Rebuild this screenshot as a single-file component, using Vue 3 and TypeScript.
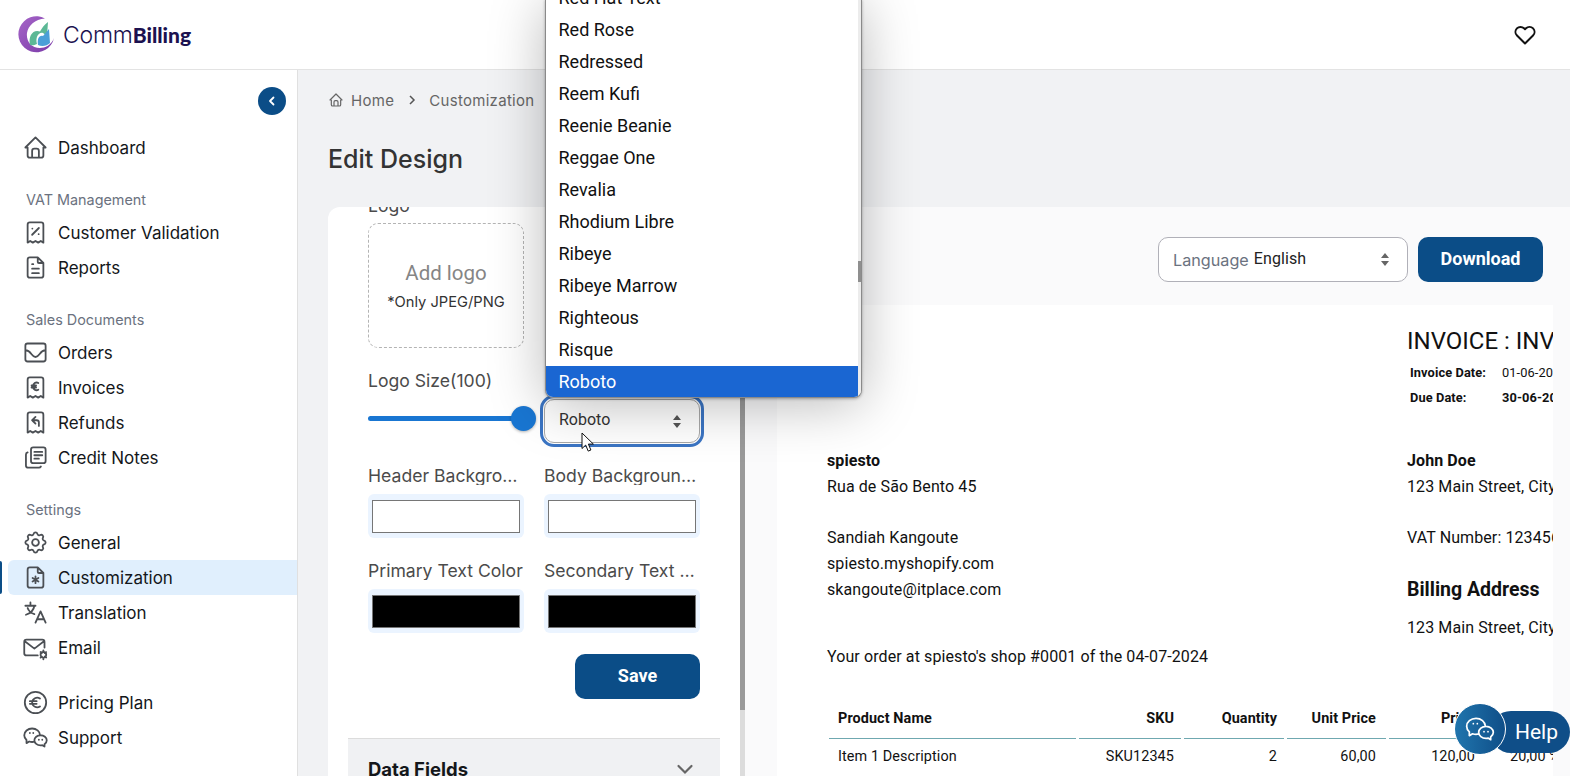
<script setup lang="ts">
interface NavItem { label: string; icon: string; active?: boolean }
interface NavGroup { title?: string; items: NavItem[] }

const receipt = 'M5 21v-16a2 2 0 0 1 2-2h10a2 2 0 0 1 2 2v16l-2.3-1.5-2.3 1.5-2.4-1.5-2.4 1.5-2.3-1.5z'
const groups: NavGroup[] = [
  { items: [{ label: 'Dashboard', icon: 'M5 12H3l9-9 9 9h-2M5 12v7a2 2 0 0 0 2 2h10a2 2 0 0 0 2-2v-7M9 21v-6a2 2 0 0 1 2-2h2a2 2 0 0 1 2 2v6' }] },
  { title: 'VAT Management', items: [
    { label: 'Customer Validation', icon: receipt + 'M9 14l6-6M9.2 8.5h.01M14.8 13.5h.01' },
    { label: 'Reports', icon: 'M14 3v4a1 1 0 0 0 1 1h4M17 21H7a2 2 0 0 1-2-2V5a2 2 0 0 1 2-2h7l5 5v11a2 2 0 0 1-2 2zM9 9h1M9 13h6M9 17h6' },
  ] },
  { title: 'Sales Documents', items: [
    { label: 'Orders', icon: 'M3 6a2 2 0 0 1 2-2h14a2 2 0 0 1 2 2v12a2 2 0 0 1-2 2H5a2 2 0 0 1-2-2zM3 10c3 0 4 1.500 5.500 3.500s2 2.500 3.500 2.500 2-.5 3.500-2.500 2.500-3.500 5.500-3.500' },
    { label: 'Invoices', icon: receipt + 'M14.500 8a3 3 0 0 0-4.500 3 3 3 0 0 0 4.500 3M8.500 10.200H12.500M8.500 12H12.500' },
    { label: 'Refunds', icon: receipt + 'M12 7L9 10l3 3M9 10h4a2 2 0 0 1 2 2v3' },
    { label: 'Credit Notes', icon: 'M8 5a2 2 0 0 1 2-2h9a2 2 0 0 1 2 2v10a2 2 0 0 1-2 2h-9a2 2 0 0 1-2-2zM11 7h7M11 10h7M11 13h4M5 7.500A2 2 0 0 0 3.500 9.500V19a2 2 0 0 0 2 2H15a2 2 0 0 0 1.800-1' },
  ] },
  { title: 'Settings', items: [
    { label: 'General', icon: 'M10.325 4.317c.426-1.756 2.924-1.756 3.350 0a1.724 1.724 0 0 0 2.573 1.066c1.543-.94 3.310.826 2.370 2.370a1.724 1.724 0 0 0 1.065 2.572c1.756.426 1.756 2.924 0 3.350a1.724 1.724 0 0 0-1.066 2.573c.94 1.543-.826 3.310-2.370 2.370a1.724 1.724 0 0 0-2.572 1.065c-.426 1.756-2.924 1.756-3.350 0a1.724 1.724 0 0 0-2.573-1.066c-1.543.94-3.310-.826-2.370-2.370a1.724 1.724 0 0 0-1.065-2.572c-1.756-.426-1.756-2.924 0-3.350a1.724 1.724 0 0 0 1.066-2.573c-.94-1.543.826-3.310 2.370-2.370 1 .608 2.296.07 2.572-1.065zM9 12a3 3 0 1 0 6 0 3 3 0 0 0-6 0' },
    { label: 'Customization', active: true, icon: 'M14 3v4a1 1 0 0 0 1 1h4M17 21H7a2 2 0 0 1-2-2V5a2 2 0 0 1 2-2h7l5 5v11a2 2 0 0 1-2 2zM12 11v6M9.400 12.500l5.200 3M14.600 12.500l-5.200 3' },
    { label: 'Translation', icon: 'M3 6h9M7.500 3v3M11 6c-.5 3.500-3 6.500-7.500 8M5 8c.8 2.500 3 4.500 6 5.500M12 21l4.500-10 4.500 10M13.500 18h6' },
    { label: 'Email', icon: 'M20 12V7a2 2 0 0 0-2-2H4a2 2 0 0 0-2 2v10a2 2 0 0 0 2 2h10M2.500 6.500L11 13l8.500-6.500M19 16a2.500 2.500 0 1 0 0 5 2.500 2.500 0 0 0 0-5zM19 14.500V16M19 21v1.500M16.500 16l1.200.9M20.300 20l1.200.9M16.500 21l1.200-.9M20.300 17l1.200-.9' },
  ] },
  { items: [
    { label: 'Pricing Plan', icon: 'M12 21.500a9.500 9.500 0 1 0 0-19 9.500 9.500 0 0 0 0 19zM16 8.500a4.500 4.500 0 0 0-7 3.500 4.500 4.500 0 0 0 7 3.500M7 10.800h6M7 13.200h6' },
    { label: 'Support', icon: 'M16.500 10c3.038 0 5.500 2.015 5.500 4.500 0 1.397-.778 2.645-2 3.470V20l-1.964-1.178a6.649 6.649 0 0 1-1.536.178c-3.038 0-5.500-2.015-5.500-4.500s2.462-4.500 5.500-4.500zM11.197 15.698c-.69.196-1.430.302-2.197.302a8.008 8.008 0 0 1-2.612-.432L4 17v-2.801C2.763 13.117 2 11.635 2 10c0-3.314 3.134-6 7-6 3.782 0 6.863 2.570 7 5.785M10 8h.01M7 8h.01M15 14h.01M18 14h.01' },
  ] },
]

const fonts: string[] = ['Red Hat Text', 'Red Rose', 'Redressed', 'Reem Kufi', 'Reenie Beanie', 'Reggae One', 'Revalia', 'Rhodium Libre', 'Ribeye', 'Ribeye Marrow', 'Righteous', 'Risque', 'Roboto']

const swatches = [
  { label: 'Header Background Color', black: false },
  { label: 'Body Background Color', black: false },
  { label: 'Primary Text Color', black: true },
  { label: 'Secondary Text Color', black: true },
]

const tableHead: string[] = ['Product Name', 'SKU', 'Quantity', 'Unit Price', 'Price', 'Tax']
const tableRow: string[] = ['Item 1 Description', 'SKU12345', '2', '60,00', '120,00', '20,00 %']
const wechat = 'M16.500 10c3.038 0 5.500 2.015 5.500 4.500 0 1.397-.778 2.645-2 3.470V20l-1.964-1.178a6.649 6.649 0 0 1-1.536.178c-3.038 0-5.500-2.015-5.500-4.500s2.462-4.500 5.500-4.500zM11.197 15.698c-.69.196-1.430.302-2.197.302a8.008 8.008 0 0 1-2.612-.432L4 17v-2.801C2.763 13.117 2 11.635 2 10c0-3.314 3.134-6 7-6 3.782 0 6.863 2.570 7 5.785M10 8h.01M7 8h.01M15 14h.01M18 14h.01'
</script>

<template>
  <div class="app">
    <header class="topbar">
      <div class="brand">
        <svg class="brand-mark" width="37" height="37" viewBox="0 0 37 37">
          <defs>
            <linearGradient id="crescent" x1="0" y1="0" x2="1" y2="1">
              <stop offset="0" stop-color="#a665c8" />
              <stop offset="1" stop-color="#7a3aa8" />
            </linearGradient>
          </defs>
          <path d="M27 2.500A18 18 0 1 0 36 22C33.500 29 27 32 22 32 13 32 8 25 9 17 10 10 17 3 27 2.500z" fill="url(#crescent)" />
          <path d="M12 29C10 20 15 13 22 15.500 24 12 26 9 30 6L29 20 25 17C21 15.500 17 21 19 28 16 29.500 14 29.500 12 29z" fill="#5cb896" />
          <path d="M20 29C19 23 21 19 25 20L31 13 32 27C29 30 24 31 20 29z" fill="#4a9fd8" />
        </svg>
        <span class="brand-text">Comm<b>Billing</b></span>
      </div>
      <svg class="heart" width="24" height="24" viewBox="0 0 24 24" fill="none" stroke="#111" stroke-width="2" stroke-linejoin="round">
        <path d="M12 20.500l-8-8a5 5 0 0 1 7-7.200l1 1 1-1a5 5 0 0 1 7 7.200z" />
      </svg>
    </header>

    <div class="body">
      <aside class="sidebar">
        <div class="toggle-row">
          <button class="toggle" type="button">
            <svg width="12" height="12" viewBox="0 0 12 12" fill="none" stroke="#fff" stroke-width="1.800" stroke-linecap="round" stroke-linejoin="round"><path d="M7.500 2.500L4 6l3.500 3.500" /></svg>
          </button>
        </div>
        <section v-for="(group, g) in groups" :key="g" class="group">
          <div v-if="group.title" class="group-title">{{ group.title }}</div>
          <a v-for="item in group.items" :key="item.label" class="nav-item" :class="{ active: item.active }">
            <svg class="nav-icon" width="27" height="27" viewBox="0 0 24 24" fill="none" stroke="#4b4f54" stroke-width="1.600" stroke-linecap="round" stroke-linejoin="round"><path :d="item.icon" /></svg>
            <span>{{ item.label }}</span>
          </a>
        </section>
      </aside>

      <main class="main">
        <nav class="crumbs">
          <svg width="16" height="16" viewBox="0 0 24 24" fill="none" stroke="#666" stroke-width="1.800" stroke-linecap="round" stroke-linejoin="round"><path d="M5 12H3l9-9 9 9h-2M5 12v7a2 2 0 0 0 2 2h10a2 2 0 0 0 2-2v-7M9 21v-6a2 2 0 0 1 2-2h2a2 2 0 0 1 2 2v6" /></svg>
          <span>Home</span>
          <svg class="crumb-sep" width="10" height="12" viewBox="0 0 10 12" fill="none" stroke="#555" stroke-width="1.500"><path d="M3 2l4 4-4 4" /></svg>
          <span>Customization</span>
        </nav>
        <h1 class="title">Edit Design</h1>

        <div class="panels">
          <section class="editor">
            <div class="form">
              <label class="form-label">Logo</label>
              <div class="logo-box">
                <span class="add-logo">Add logo</span>
                <span class="logo-hint">*Only JPEG/PNG</span>
              </div>
              <label class="form-label size-label">Logo Size(100)</label>
              <div class="two-col size-row">
                <div class="slider"><span class="slider-thumb"></span></div>
                <div class="select-box">
                  <span>Roboto</span>
                  <svg width="10" height="15" viewBox="0 0 10 15" fill="#555"><path d="M5 1l4 5H1zM5 14L1 9h8z" /></svg>
                </div>
              </div>
              <div class="two-col swatch-grid">
                <div v-for="s in swatches" :key="s.label" class="swatch-col">
                  <div class="form-label ellipsis">{{ s.label }}</div>
                  <div class="swatch"><div class="swatch-input" :class="{ black: s.black }"></div></div>
                </div>
              </div>
              <div class="save-row"><button class="btn save" type="button">Save</button></div>
            </div>
            <div class="accordion">
              <span>Data Fields</span>
              <svg width="18" height="12" viewBox="0 0 18 12" fill="none" stroke="#666" stroke-width="2.200" stroke-linecap="round"><path d="M2.500 3L9 9.500 15.500 3" /></svg>
            </div>
            <div class="scrollbar"><span></span></div>
          </section>

          <section class="preview">
            <div class="toolbar">
              <div class="lang">
                <span class="lang-label">Language</span>
                <span class="lang-value">English</span>
                <svg width="10" height="15" viewBox="0 0 10 15" fill="#666"><path d="M5 1l4 5H1zM5 14L1 9h8z" /></svg>
              </div>
              <button class="btn" type="button">Download</button>
            </div>
            <article class="invoice">
              <div class="inv-head">
                <div class="inv-no">INVOICE : INV-0001</div>
                <div class="inv-date"><b>Invoice Date:</b><span>01-06-2024</span></div>
                <div class="inv-date"><b>Due Date:</b><b>30-06-2024</b></div>
              </div>
              <div class="inv-cols">
                <div>
                  <div class="line"><b>spiesto</b></div>
                  <div class="line">Rua de São Bento 45</div>
                  <div class="line">&nbsp;</div>
                  <div class="line">Sandiah Kangoute</div>
                  <div class="line">spiesto.myshopify.com</div>
                  <div class="line">skangoute@itplace.com</div>
                </div>
                <div>
                  <div class="line"><b>John Doe</b></div>
                  <div class="line">123 Main Street, City</div>
                  <div class="line">&nbsp;</div>
                  <div class="line">VAT Number: 123456789</div>
                  <div class="line">&nbsp;</div>
                  <div class="line billing">Billing Address</div>
                  <div class="line billing-addr">123 Main Street, City</div>
                </div>
              </div>
              <div class="line order">Your order at spiesto's shop #0001 of the 04-07-2024</div>
              <div class="items">
                <div v-for="h in tableHead" :key="h" class="cell head">{{ h }}</div>
                <div v-for="c in tableRow" :key="c" class="cell">{{ c }}</div>
              </div>
            </article>
          </section>
        </div>
      </main>
    </div>

    <div class="font-popup">
      <div class="font-list">
        <div v-for="f in fonts" :key="f" class="font-option" :class="{ selected: f === 'Roboto' }">{{ f }}</div>
      </div>
      <div class="popup-scroll"><span></span></div>
    </div>

    <svg class="cursor" width="14" height="21" viewBox="0 0 14 21"><path d="M1 1v15.500l3.700-3.400 2.500 6 2.700-1.100-2.500-5.900h5z" fill="#fff" stroke="#111" stroke-width="1" stroke-linejoin="round" /></svg>

    <div class="help">
      <span class="help-circle">
        <svg width="32" height="32" viewBox="0 0 24 24" fill="none" stroke="#fff" stroke-width="1.300" stroke-linecap="round" stroke-linejoin="round"><path :d="wechat" /></svg>
      </span>
      <span class="help-text">Help</span>
    </div>
  </div>
</template>

<style>
html, body { margin: 0; background: #fff; overflow: hidden; }
</style>

<style scoped>
* { box-sizing: border-box; }
.app { position: relative; width: 1570px; height: 776px; overflow: hidden; font-family: Inter, "Liberation Sans", sans-serif; color: #14171a; background: #f1f2f4; }
.topbar { height: 70px; background: #fff; border-bottom: 1px solid #e3e3e3; display: flex; align-items: center; justify-content: space-between; padding: 0 33px 0 18px; }
.brand { display: flex; align-items: center; gap: 8px; }
.brand-mark { display: block; margin-top: -1px; }
.brand-text { font-size: 23px; font-weight: 300; color: #1c1250; letter-spacing: -.2px; }
.brand-text b { font-family: Lato, sans-serif; font-size: 21px; font-weight: 900; letter-spacing: 0; }
.body { display: flex; height: 706px; }
.sidebar { width: 298px; flex: none; background: #fff; border-right: 1px solid #e0e0e0; }
.toggle-row { display: flex; justify-content: flex-end; padding: 17px 11px 0 0; height: 60px; }
.toggle { width: 28px; height: 28px; border: 0; padding: 0; border-radius: 50%; background: #0b4d87; display: flex; align-items: center; justify-content: center; }
.group { margin-bottom: 25px; }
.group:nth-of-type(4) { margin-bottom: 20px; }
.group-title { height: 20px; line-height: 20px; margin: 0 0 5px 26px; font-size: 14.400px; color: #6b7280; }
.nav-item { position: relative; display: flex; align-items: center; height: 35px; margin-left: 8px; padding-left: 14px; gap: 9px; font-size: 17px; color: #14171a; border-radius: 6px 0 0 6px; }
.nav-item.active { background: #e0effd; }
.nav-item.active::before { content: ""; position: absolute; left: -8px; top: 1px; bottom: 1px; width: 2px; background: #0b4d87; border-radius: 0 2px 2px 0; }
.nav-icon { flex: none; }
.main { flex: 1; min-width: 0; padding: 20px 0 0 30px; }
.crumbs { height: 20px; display: flex; align-items: center; font-size: 15px; letter-spacing: .3px; color: #666; }
.crumbs span:first-of-type { margin-left: 7px; }
.crumb-sep { margin: 0 12px 0 13px; }
.title { margin: 33px 0 0; height: 32px; line-height: 32px; font-size: 25px; font-weight: 500; color: #333; }
.panels { display: flex; margin-top: 32px; height: 569px; }
.editor { position: relative; width: 417px; flex: none; background: #fff; border-radius: 12px 0 0 0; overflow: hidden; }
.form { padding: 0 0 0 40px; margin-top: -12px; width: 372px; }
.form-label { display: block; height: 20px; line-height: 22px; font-size: 17.600px; color: #4b4b4b; }
.ellipsis { white-space: nowrap; overflow: hidden; text-overflow: ellipsis; }
.logo-box { margin-top: 8px; width: 156px; height: 125px; border: 1px dashed #b4b4b4; border-radius: 10px; display: flex; flex-direction: column; align-items: center; padding-top: 36px; }
.add-logo { font-family: Roboto, sans-serif; font-size: 20.500px; line-height: 26px; color: #858585; }
.logo-hint { font-size: 14.700px; line-height: 20px; margin-top: 6px; color: #333; }
.size-label { margin-top: 22px; }
.two-col { display: grid; grid-template-columns: 156px 156px; column-gap: 20px; }
.size-row { margin-top: 9px; align-items: center; }
.slider { position: relative; height: 5px; background: #1976d2; border-radius: 3px; margin-top: -5px; }
.slider-thumb { position: absolute; right: -12px; top: -10px; width: 25px; height: 25px; border-radius: 50%; background: #1976d2; box-shadow: 0 1px 3px rgba(0,0,0,.3); }
.select-box { height: 44px; border: 1px solid #a8a8a8; border-radius: 10px; outline: 3px solid #3b75c4; outline-offset: 1px; background: #fff; display: flex; align-items: center; justify-content: space-between; padding: 0 17px 3px 14px; font-family: Roboto, sans-serif; font-size: 16px; color: #333; }
.select-box svg { margin-top: 3px; }
.swatch-grid { margin-top: 22px; row-gap: 22px; }
.swatch { margin-top: 9px; height: 44px; background: #ebf4ff; border-radius: 6px; padding: 6px 4px 5px; }
.swatch-input { height: 33px; background: #fff; border: 1px solid #767676; }
.swatch-input.black { background: #000; }
.save-row { display: flex; justify-content: flex-end; margin-top: 21px; width: 332px; }
.btn { width: 125px; height: 45px; border: 0; border-radius: 10px; padding: 0 0 2px; background: #0b4d87; color: #fff; font-family: Roboto, sans-serif; font-size: 18px; font-weight: 700; }
.accordion { margin: 39px 0 0 20px; width: 372px; height: 60px; background: #f0f1f3; border-top: 1px solid #dcdcdc; display: flex; justify-content: space-between; align-items: flex-start; padding: 19px 26px 0 20px; font-size: 18.500px; font-weight: 700; color: #14171a; line-height: 22px; }
.accordion svg { margin-top: 5px; }
.scrollbar { position: absolute; top: 0; right: 0; bottom: 0; width: 5px; background: #dcdcdc; }
.scrollbar span { display: block; height: 503px; background: #9a9a9a; }
.preview { flex: 1; min-width: 0; background: #fafafb; }
.toolbar { height: 98px; display: flex; align-items: flex-start; justify-content: flex-end; gap: 10px; padding: 30px 27px 0 0; }
.lang { width: 250px; height: 45px; background: #fff; border: 1px solid #b0b0b8; border-radius: 10px; display: flex; align-items: center; padding: 0 17px 0 14px; font-size: 16.200px; color: #6b7280; }
.lang-label { margin-right: 5px; }
.lang-value { flex: 1; font-family: Roboto, sans-serif; font-size: 16px; letter-spacing: .1px; color: #222; margin-top: -3px; }
.invoice { margin-left: 32px; width: 776px; height: 471px; background: #fff; overflow: hidden; font-family: Roboto, sans-serif; font-size: 16px; letter-spacing: .1px; color: #111; white-space: nowrap; padding-left: 50px; }
.inv-head { height: 143px; padding: 22px 0 0 580px; }
.inv-no { font-size: 24px; line-height: 28px; letter-spacing: 0; color: #111; margin-bottom: 5px; }
.inv-date { display: grid; grid-template-columns: 92px auto; padding-left: 3px; font-size: 12.800px; line-height: 25px; }
.inv-cols { display: grid; grid-template-columns: 580px 1fr; }
.line { height: 25.750px; line-height: 25.750px; }
.billing { font-size: 19.500px; font-weight: 700; letter-spacing: 0; }
.billing-addr { margin-top: 12px; }
.order { margin-top: 4px; }
.items { display: grid; grid-template-columns: 247px 102px 100px 99px 98px 77px; column-gap: 3px; margin: 29px 0 0 2px; }
.cell { height: 36px; line-height: 36px; font-size: 14.400px; text-align: right; padding-right: 7px; }
.cell:nth-child(6n+1) { text-align: left; padding-left: 9px; }
.cell:nth-child(6n+4) { padding-right: 10px; }
.cell:nth-child(6n+5) { padding-right: 12px; }
.head { height: 40px; line-height: 40px; font-weight: 700; border-bottom: 1px solid #6fa8b0; }
.font-popup { position: absolute; left: 545px; top: -1px; width: 317px; height: 399px; background: #fff; border: 1px solid #8a8a8a; border-top: 0; border-radius: 0 0 8px 8px; box-shadow: 0 6px 55px rgba(0,0,0,.28), 0 1px 3px rgba(0,0,0,.3); overflow: hidden; font-family: Roboto, sans-serif; font-size: 18px; color: #111; }
.font-list { margin: -17px 3px 0 0; }
.font-option { height: 32px; line-height: 32px; padding-left: 12.500px; }
.font-option.selected { background: #1a66d2; color: #fff; }
.popup-scroll { position: absolute; top: 0; right: 0; bottom: 0; width: 3px; background: #ececec; }
.popup-scroll span { display: block; margin-top: 262px; height: 21px; background: #8f8f8f; }
.cursor { position: absolute; left: 581px; top: 432px; }
.help { position: absolute; right: 0; top: 703px; width: 116px; height: 50px; }
.help-text { position: absolute; left: 36px; right: 0; top: 8px; height: 42px; background: #0f4e88; border-radius: 21px; color: #fff; font-family: Roboto, sans-serif; font-size: 21px; line-height: 42px; padding-left: 25px; }
.help-circle { position: absolute; z-index: 1; left: 0; top: 0; width: 52px; height: 52px; border-radius: 50%; border: 1.500px solid #fff; background: linear-gradient(90deg, #2075ad, #0f4e88); display: flex; align-items: center; justify-content: center; }
.heart { display: block; }
</style>
